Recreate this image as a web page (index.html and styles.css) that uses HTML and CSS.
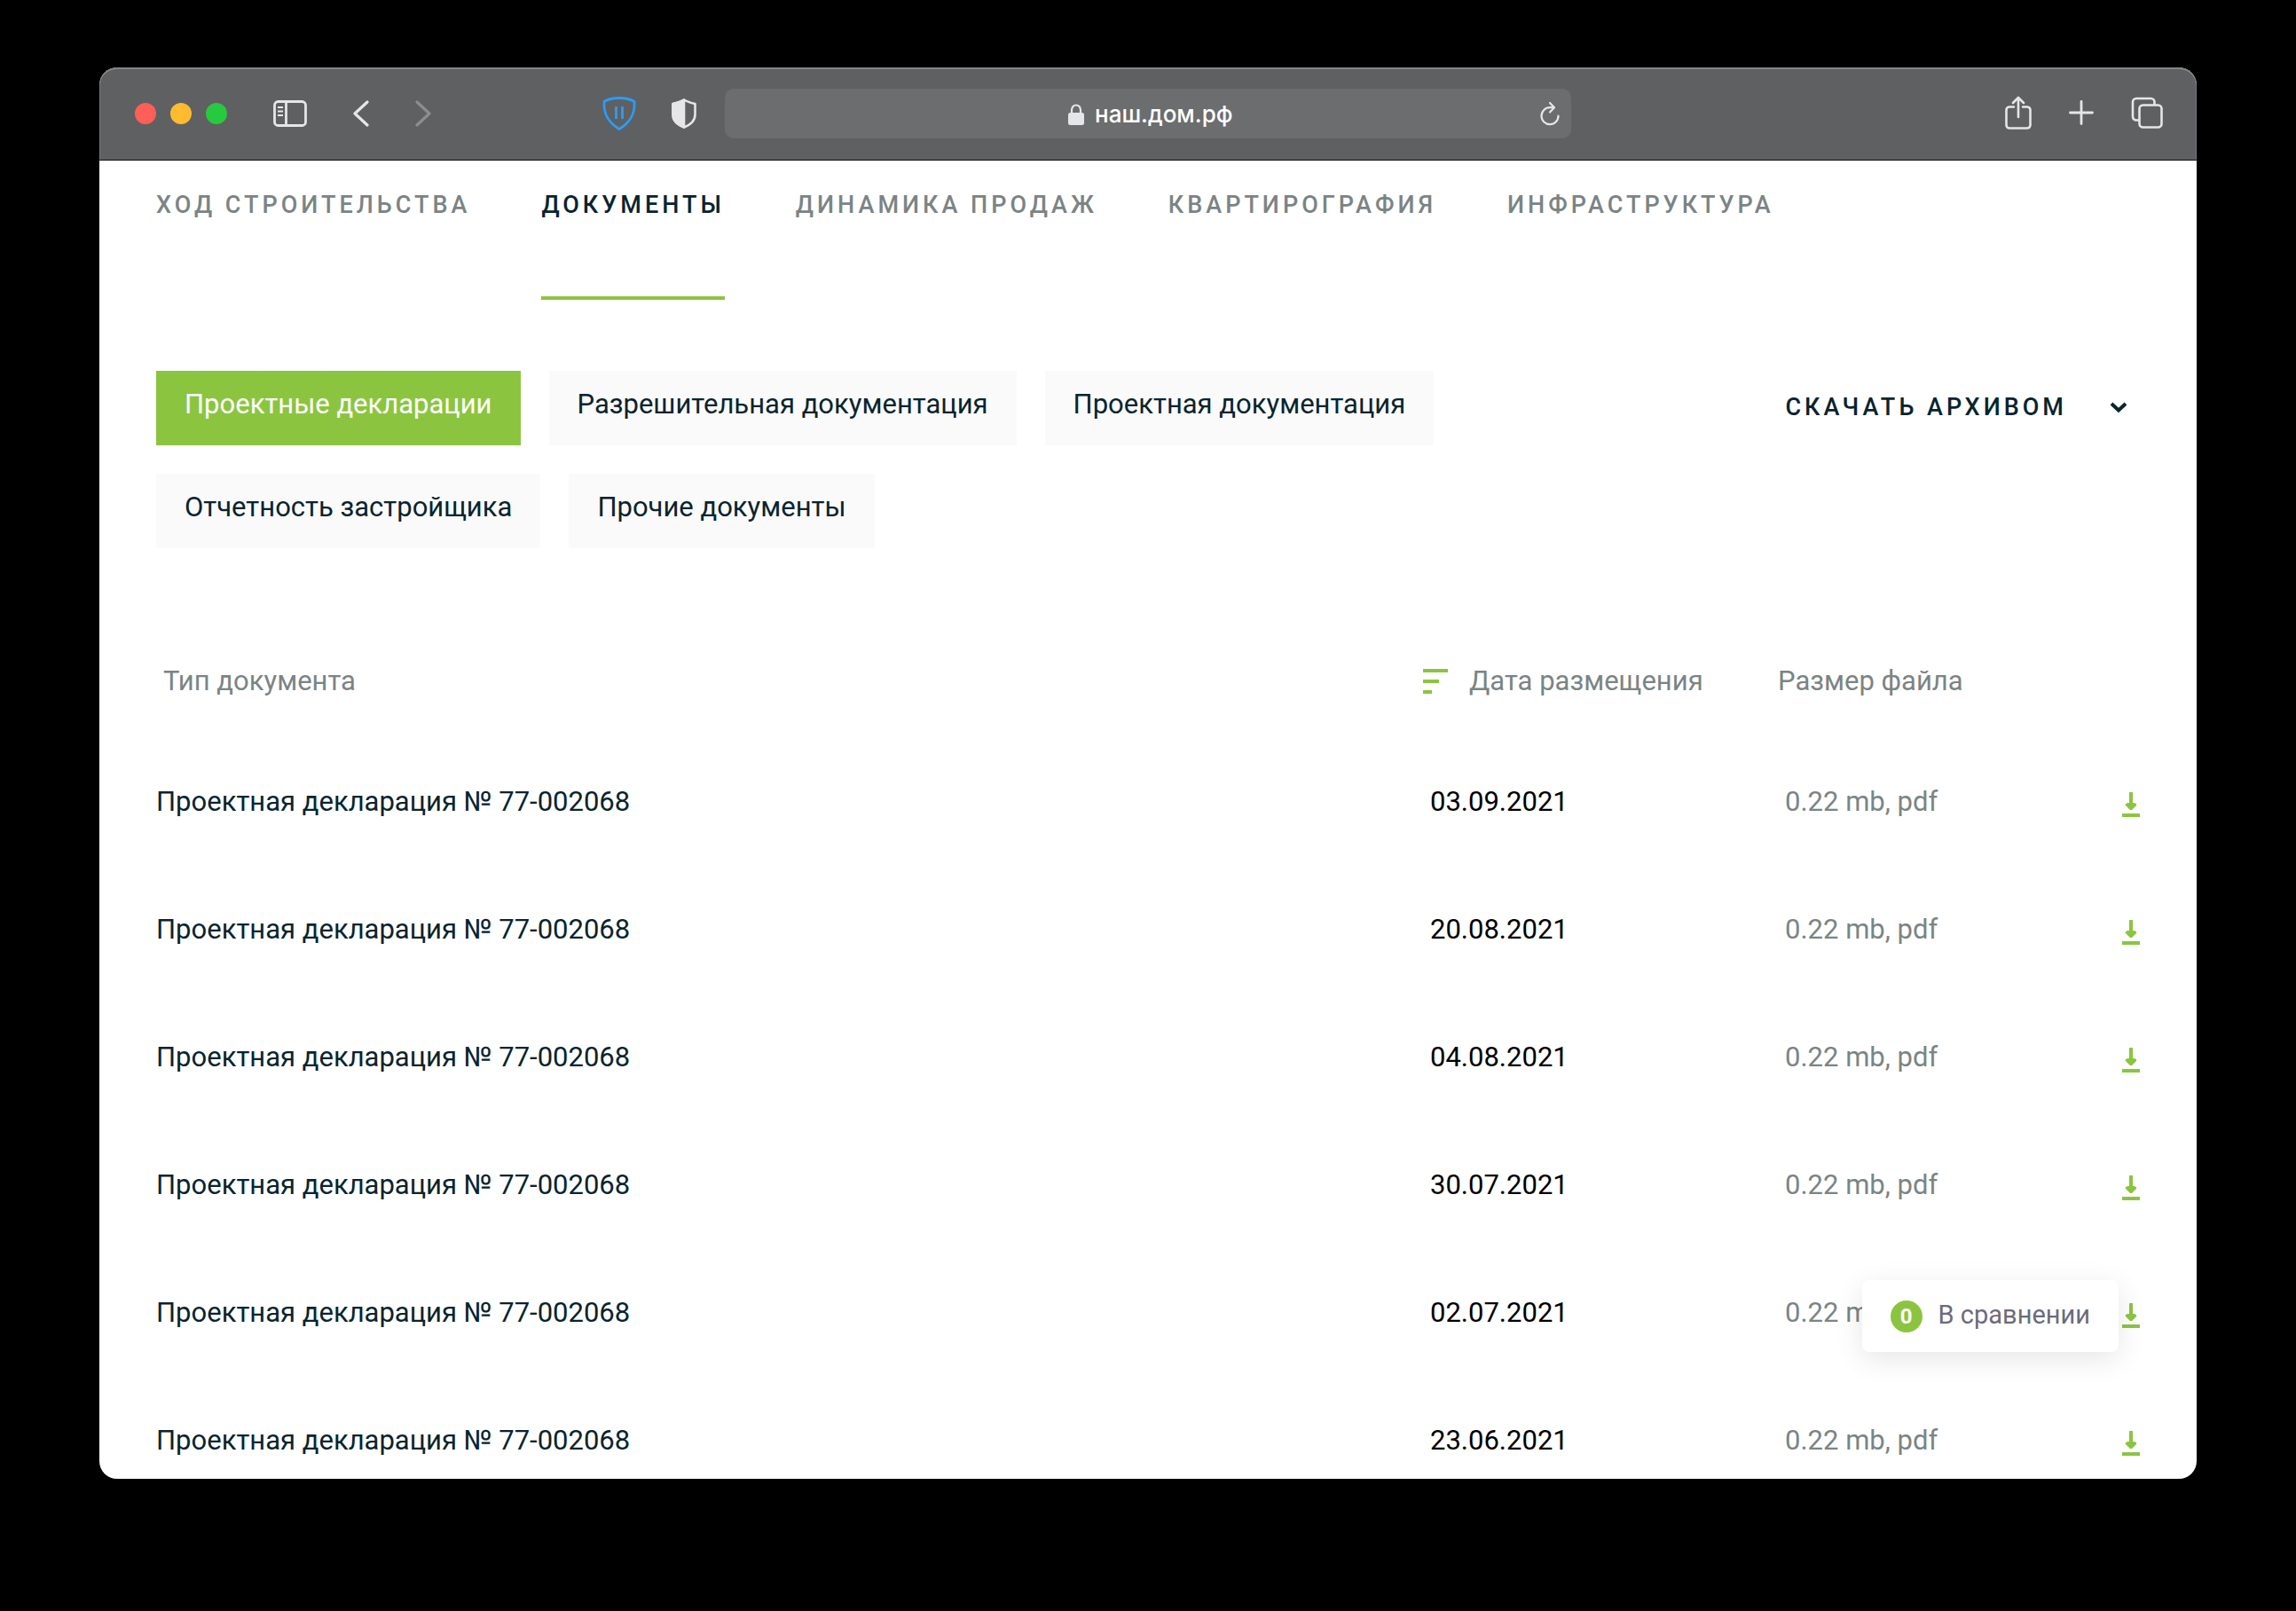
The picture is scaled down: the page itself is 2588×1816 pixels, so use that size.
FILE: index.html
```html
<!DOCTYPE html>
<html lang="ru">
<head>
<meta charset="utf-8">
<meta name="viewport" content="width=device-width, initial-scale=1">
<title>наш.дом.рф</title>
<link rel="stylesheet" href="styles.css">
</head>
<body>
<svg class="sprite" aria-hidden="true">
  <symbol id="download" viewBox="0 0 20 28"><path d="M8 0h4v12c3 0 5 1 4 3l-5 5h-2l-5-5c-1-2 1-3 4-3zM0 24h20v4H0z" fill="currentColor"/></symbol>
</svg>
<div class="window">
  <header class="toolbar">
    <div class="tools tools-left">
      <div class="lights">
        <button class="light light-close" aria-label="Закрыть"></button>
        <button class="light light-min" aria-label="Свернуть"></button>
        <button class="light light-max" aria-label="Развернуть"></button>
      </div>
      <button class="tool" aria-label="Боковая панель"><svg width="38" height="30" viewBox="0 0 38 30" fill="none" stroke="currentColor" stroke-width="2.8"><rect x="1.5" y="1.5" width="35" height="27" rx="4"/><path d="M14.5 1.5v27"/><path d="M5 8h6M5 12.5h6M5 17h6" stroke-width="2"/></svg></button>
      <div class="history">
        <button class="tool" aria-label="Назад"><svg width="18" height="30" viewBox="0 0 18 30" fill="none" stroke="currentColor" stroke-width="3.2" stroke-linecap="round" stroke-linejoin="round"><path d="M16 2 2 15l14 13"/></svg></button>
        <button class="tool tool-off" aria-label="Вперёд"><svg width="18" height="30" viewBox="0 0 18 30" fill="none" stroke="currentColor" stroke-width="3.2" stroke-linecap="round" stroke-linejoin="round"><path d="m2 2 14 13L2 28"/></svg></button>
      </div>
      <div class="extensions">
        <button class="tool tool-blue" aria-label="Блокировщик"><svg width="38" height="38" viewBox="0 0 38 38" fill="none" stroke="currentColor" stroke-width="2.8" stroke-linejoin="round"><path d="M19 1.5C12 1.5 6 3 2 5.500 1 20 7 29 19 36.500 31 29 37 20 36 5.500 32 3 26 1.500 19 1.500z"/><path d="M15.500 11v14M22.500 11v14"/></svg></button>
        <button class="tool" aria-label="Отчёт о конфиденциальности"><svg width="28" height="34" viewBox="0 0 28 34" fill="none" stroke="currentColor" stroke-width="2.6" stroke-linejoin="round"><path d="M14 1.500C10 4 6 5 1.500 6v12c0 7 6 12 12.500 14.500C20.500 30 26.500 25 26.500 18V6C22 5 18 4 14 1.500z"/><path d="M14 1.500C10 4 6 5 1.500 6v12c0 7 6 12 12.500 14.500z" fill="currentColor"/></svg></button>
      </div>
    </div>
    <div class="address">
      <label class="address-field">
        <svg width="18" height="24" viewBox="0 0 18 24" fill="none"><rect y="10" width="18" height="14" rx="2.5" fill="currentColor"/><path d="M4 11V7a5 5.500 0 0 1 10 0v4" stroke="currentColor" stroke-width="2.2"/></svg>
        <input class="url" type="text" value="наш.дом.рф" aria-label="Адрес">
      </label>
      <button class="tool reload" aria-label="Обновить"><svg width="24" height="28" viewBox="0 0 24 28" fill="none" stroke="currentColor" stroke-width="2.2" stroke-linecap="round" stroke-linejoin="round"><path d="M16.500 7.200H12A9.500 9.500 0 1 0 21.500 16.500"/><path d="m12 2 5 5.200-5 5.200"/></svg></button>
    </div>
    <div class="tools tools-right">
      <button class="tool" aria-label="Поделиться"><svg width="30" height="38" viewBox="0 0 30 38" fill="none" stroke="currentColor" stroke-width="2.6" stroke-linecap="round" stroke-linejoin="round"><path d="M10 12.500H5A3.500 3.500 0 0 0 1.500 16v17A3.500 3.500 0 0 0 5 36.500h20a3.500 3.500 0 0 0 3.500-3.500V16a3.500 3.500 0 0 0-3.500-3.500h-5M15 24V2M9 8l6-6 6 6"/></svg></button>
      <button class="tool" aria-label="Новая вкладка"><svg width="28" height="28" viewBox="0 0 28 28" stroke="currentColor" stroke-width="2.8" stroke-linecap="round"><path d="M14 1.500v25M1.500 14h25"/></svg></button>
      <button class="tool" aria-label="Обзор вкладок"><svg width="36" height="36" viewBox="0 0 36 36" fill="none" stroke="currentColor" stroke-width="2.6"><rect x="9.5" y="9.5" width="25" height="25" rx="4"/><path d="M9.500 26.500H6a4 4 0 0 1-4-4V6a4 4 0 0 1 4-4h16.500a4 4 0 0 1 4 4v3.500"/></svg></button>
    </div>
  </header>

  <main class="page">
    <nav class="tabs">
      <a class="tab" href="#progress">Ход строительства</a>
      <a class="tab tab-active" href="#documents" aria-current="page">Документы</a>
      <a class="tab" href="#sales">Динамика продаж</a>
      <a class="tab" href="#flats">Квартирография</a>
      <a class="tab" href="#infrastructure">Инфраструктура</a>
    </nav>

    <div class="filters">
      <div class="chips">
        <button class="chip chip-active">Проектные декларации</button>
        <button class="chip">Разрешительная документация</button>
        <button class="chip">Проектная документация</button>
        <button class="chip">Отчетность застройщика</button>
        <button class="chip">Прочие документы</button>
      </div>
      <button class="archive">Скачать архивом
        <svg width="20" height="14" viewBox="0 0 20 14" fill="none" stroke="currentColor" stroke-width="4"><path d="m2 3 8 7.500L18 3"/></svg>
      </button>
    </div>

    <table class="docs">
      <colgroup><col><col class="col-date"><col class="col-size"><col class="col-load"></colgroup>
      <thead>
        <tr>
          <th class="head-type" scope="col">Тип документа</th>
          <th scope="col"><button class="sort"><svg width="28" height="28" viewBox="0 0 28 28" fill="currentColor"><path d="M0 0h28v4H0zM0 12h18v4H0zM0 24h10v4H0z"/></svg>Дата размещения</button></th>
          <th scope="col">Размер файла</th>
          <th scope="col" aria-label="Скачать"></th>
        </tr>
      </thead>
      <tbody>
        <tr><td>Проектная декларация № 77-002068</td><td class="date">03.09.2021</td><td class="size">0.22 mb, pdf</td><td class="load"><a href="#d1" aria-label="Скачать"><svg width="20" height="28"><use href="#download"/></svg></a></td></tr>
        <tr><td>Проектная декларация № 77-002068</td><td class="date">20.08.2021</td><td class="size">0.22 mb, pdf</td><td class="load"><a href="#d2" aria-label="Скачать"><svg width="20" height="28"><use href="#download"/></svg></a></td></tr>
        <tr><td>Проектная декларация № 77-002068</td><td class="date">04.08.2021</td><td class="size">0.22 mb, pdf</td><td class="load"><a href="#d3" aria-label="Скачать"><svg width="20" height="28"><use href="#download"/></svg></a></td></tr>
        <tr><td>Проектная декларация № 77-002068</td><td class="date">30.07.2021</td><td class="size">0.22 mb, pdf</td><td class="load"><a href="#d4" aria-label="Скачать"><svg width="20" height="28"><use href="#download"/></svg></a></td></tr>
        <tr><td>Проектная декларация № 77-002068</td><td class="date">02.07.2021</td><td class="size">0.22 mb, pdf</td><td class="load"><a href="#d5" aria-label="Скачать"><svg width="20" height="28"><use href="#download"/></svg></a></td></tr>
        <tr><td>Проектная декларация № 77-002068</td><td class="date">23.06.2021</td><td class="size">0.22 mb, pdf</td><td class="load"><a href="#d6" aria-label="Скачать"><svg width="20" height="28"><use href="#download"/></svg></a></td></tr>
      </tbody>
    </table>
  </main>

  <a class="compare" href="#compare"><span class="count">0</span><span class="compare-text">В сравнении</span></a>
</div>
</body>
</html>
```
FILE: styles.css
```css
* { box-sizing: border-box; }

body {
  margin: 0;
  height: 100vh;
  padding: 76px 112px 149px;
  background: #000;
  color: #08242e;
  font: 400 31px/40px Roboto, "Liberation Sans", sans-serif;
}

button, input {
  margin: 0;
  padding: 0;
  border: 0;
  background: none;
  color: inherit;
  font: inherit;
  letter-spacing: inherit;
}

a { color: inherit; text-decoration: none; }
svg { display: block; flex: none; }
.sprite { position: absolute; width: 0; height: 0; }

.window {
  position: relative;
  display: flex;
  flex-direction: column;
  height: 100%;
  overflow: hidden;
  border-radius: 20px;
  background: #fff;
}

/* browser toolbar */
.toolbar {
  flex: none;
  display: grid;
  grid-template-columns: 1fr minmax(0, 954px) 1fr;
  align-items: center;
  height: 105px;
  border-bottom: 1px solid #0c0c0c;
  border-radius: 20px 20px 0 0;
  background: #5f6062;
  box-shadow: inset 0 2px 0 #848586, inset 1px 0 0 #77787a, inset -1px 0 0 #77787a;
  color: #e6e6e8;
}
.tools { display: flex; align-items: center; }
.tools-left { padding: 0 32px 0 40px; gap: 52px; }
.tools-right { justify-content: flex-end; padding: 0 38px 2px 0; gap: 42px; }
.lights { display: flex; gap: 16px; }
.light { width: 24px; height: 24px; border-radius: 50%; }
.light-close { background: #ff5f57; }
.light-min { background: #febb2e; }
.light-max { background: #27c93f; }
.history { display: flex; gap: 52px; }
.tool-off { color: #8c8d8f; }
.tool-blue { color: #2b9df4; }
.extensions { display: flex; align-items: center; gap: 40px; margin-left: auto; }

.address {
  display: flex;
  align-items: center;
  height: 56px;
  padding: 0 12px 0 42px;
  border-radius: 10px;
  background: #6c6d6f;
}
.address-field { flex: 1; display: flex; align-items: center; justify-content: center; gap: 12px; padding-top: 2px; }
.url { width: 156px; color: #fff; font: 500 26px/32px Inter, sans-serif; }

/* page */
.page { flex: 1; min-height: 0; overflow: hidden; padding: 32px 64px 0; }

.tabs { display: flex; gap: 80px; }
.tab {
  height: 125px;
  border-bottom: 4px solid transparent;
  color: #7b8484;
  font-size: 27px;
  font-weight: 500;
  line-height: 36px;
  letter-spacing: 4px;
  text-transform: uppercase;
}
.tab-active { border-color: #8bc540; color: #08242e; }

.filters { display: flex; justify-content: space-between; align-items: flex-start; margin-top: 80px; }
.chips { display: flex; flex-wrap: wrap; gap: 32px; max-width: 1500px; }
.chip { height: 84px; padding: 18px 32px 26px; background: #fafafa; }
.chip-active { background: #8bc540; color: #fff; }
.archive {
  display: flex;
  align-items: center;
  gap: 48px;
  height: 84px;
  padding: 0 14px 2px 0;
  font-size: 27px;
  font-weight: 500;
  letter-spacing: 4px;
  text-transform: uppercase;
}

.docs { width: 100%; margin-top: 96px; border-collapse: collapse; table-layout: fixed; }
.col-date { width: 400px; }
.col-size { width: 300px; }
.col-load { width: 108px; }
.docs th { height: 118px; padding: 0 0 10px; color: #7b8484; font-weight: 400; text-align: left; vertical-align: middle; }
.docs .head-type { padding-left: 8px; }
.sort { display: flex; align-items: center; gap: 24px; }
.sort svg { color: #8bc540; }
.docs td { height: 144px; padding: 0; vertical-align: middle; }
.docs .date { padding-left: 8px; color: #000; }
.docs .size { padding-left: 8px; color: #7b8484; }
.load a { display: flex; justify-content: flex-end; padding-top: 6px; color: #8bc540; }

.compare {
  position: absolute;
  right: 88px;
  bottom: 143px;
  display: flex;
  align-items: center;
  gap: 18px;
  height: 81px;
  padding: 0 32px;
  border-radius: 8px;
  background: #fff;
  box-shadow: 0 8px 32px rgba(0, 0, 0, .1);
  color: #6c6b7b;
  font-size: 29px;
}
.compare-text { padding-bottom: 4px; }
.count {
  width: 36px;
  height: 36px;
  border-radius: 50%;
  background: #8bc540;
  color: #fff;
  font-size: 24px;
  font-weight: 700;
  line-height: 36px;
  text-align: center;
}
```
